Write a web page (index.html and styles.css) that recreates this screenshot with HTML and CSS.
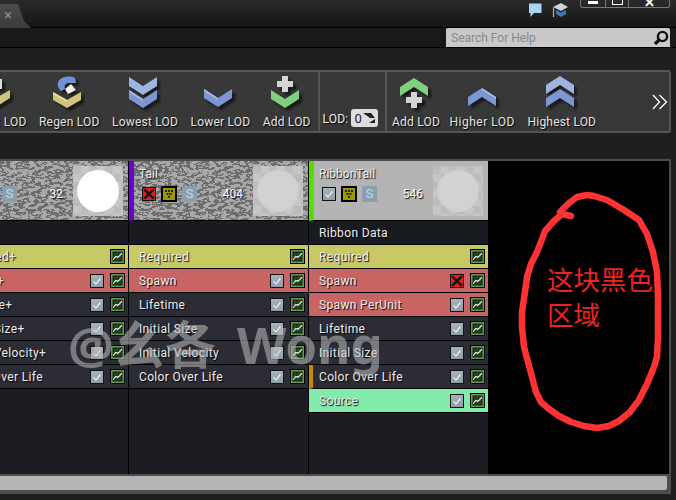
FILE: index.html
```html
<!DOCTYPE html>
<html lang="zh-CN">
<head>
  <meta charset="UTF-8" />
  <title>Cascade</title>
  <link rel="stylesheet" href="styles.css">
</head>

<body>

  <svg class="defs" width="0" height="0">
    <filter id="noise" x="0" y="0" width="100%" height="100%" color-interpolation-filters="sRGB">
      <feTurbulence type="fractalNoise" baseFrequency="0.16 0.33" numOctaves="2" seed="7" />
      <feColorMatrix type="matrix" values="0 0 0 0 .4  0 0 0 0 .4  0 0 0 0 .4  1 0 0 0 0" />
      <feComponentTransfer>
        <feFuncA type="discrete" tableValues="0 0 0 0 0 .9 .9 0 0 0" />
      </feComponentTransfer>
    </filter>
    <symbol id="tick" viewBox="0 0 14 14">
      <path d="M3 7.5 L5.8 10.5 L11 4" fill="none" stroke="#fff" stroke-width="1.2" />
    </symbol>
    <symbol id="cross" viewBox="0 0 14 14">
      <path d="M1.5 1.5 L12.5 12.5 M12.5 1.5 L1.5 12.5" stroke="#111" stroke-width="2.8" />
    </symbol>
    <symbol id="graph" viewBox="0 0 11 11">
      <path d="M0 2.5H11M0 5.5H11M0 8.5H11M2.5 0V11M5.5 0V11M8.5 0V11" stroke="#35552f" stroke-width="1" />
      <path d="M0 9.5 L3.5 5.5 L6 6.5 L11 1.5" fill="none" stroke="#fff" stroke-width="1.3" />
    </symbol>
    <symbol id="dice" viewBox="0 0 12 12">
      <path d="M2 2h2v2h-2zM5 2h2v2h-2zM8 2h2v2h-2zM3.5 5h2v2h-2zM6.5 5h2v2h-2zM5 8h2v2h-2z" fill="#222" />
    </symbol>
    <symbol id="down-blue" viewBox="0 0 40 40">
      <path d="M6 14 L20 23 L34 14 L34 23 L20 32 L6 23Z" fill="#7d97d4" />
      <path d="M6 14 L20 23 L20 25 L6 16Z" fill="#a9bce6" />
    </symbol>
  </svg>

  <div class="titlebar">
    <div class="tab"><span class="tab-close">×</span></div>
    <div class="title-icons">
      <svg class="title-icon" width="16" height="16" viewBox="0 0 16 16">
        <path d="M2 1.5 H14.5 V11 H7 L3.5 15 V11 H2Z" fill="#a9d5f2" />
      </svg>
      <svg class="title-icon" width="18" height="16" viewBox="0 0 18 16">
        <path d="M2 5 L10 1 L17 5 L10 9Z" fill="#c9d4dc" />
        <path d="M5 8 L10 10.5 L15 8 V12 L10 15 L5 12Z" fill="#3f78b4" />
        <path d="M2.5 5.5 V15" stroke="#d8b070" stroke-width="1.2" />
      </svg>
    </div>
    <div class="win-buttons">
      <div class="win-btn win-min"><span></span></div>
      <div class="win-btn win-max"><span></span></div>
      <div class="win-btn win-close">✕</div>
    </div>
  </div>

  <div class="menubar">
    <div class="search">
      <span class="search-text">Search For Help</span>
      <svg width="16" height="16" viewBox="0 0 16 16">
        <circle cx="9.5" cy="6.5" r="4.6" fill="none" stroke="#111" stroke-width="2.4" />
        <path d="M6 10 L2 14" stroke="#111" stroke-width="3.2" />
      </svg>
    </div>
  </div>

  <div class="toolbar-wrap">
    <div class="toolbar">
      <div class="tool">
        <svg class="tool-icon" viewBox="0 0 40 40">
          <path d="M6 15 L20 23 L34 15 V23 L20 32 L6 23Z" fill="#d0c47c" />
          <path d="M12 4 H26 V14 H12Z" fill="#ddd" />
        </svg>
        <span>Reset LOD</span>
      </div>
      <div class="tool">
        <svg class="tool-icon" viewBox="0 0 40 40">
          <path d="M6 17 L20 25 L34 17 V25 L20 33 L6 25Z" fill="#d0c47c" />
          <path d="M6 17 L20 25 L20 27 L6 19Z" fill="#e6dca0" />
          <path d="M11 8 C12 2 22 0 28 3 L29 8 L22 8 C18 8 17 11 18 14 L14 16 C12 14 10 11 11 8Z" fill="#6f93d2" />
          <path d="M18 14 L24 9 L29 15 L21 19Z" fill="#f2f2f2" />
        </svg>
        <span>Regen LOD</span>
      </div>
      <div class="tool">
        <svg class="tool-icon" viewBox="0 0 40 40">
          <path d="M6 2 L20 11 L34 2 V11 L20 20 L6 11Z" fill="#9db3e2" />
          <path d="M6 15 L20 24 L34 15 V24 L20 33 L6 24Z" fill="#7d97d4" />
          <path d="M6 15 L20 24 L20 26 L6 17Z" fill="#a9bce6" />
        </svg>
        <span>Lowest LOD</span>
      </div>
      <div class="tool">
        <svg class="tool-icon"><use href="#down-blue" /></svg>
        <span>Lower LOD</span>
      </div>
      <div class="tool">
        <svg class="tool-icon" viewBox="0 0 40 40">
          <path d="M6 15 L20 24 L34 15 V24 L20 33 L6 24Z" fill="#7fd07f" />
          <path d="M17 1 H23 V6 H28 V12 H23 V17 H17 V12 H12 V6 H17Z" fill="#d4d4d4" />
        </svg>
        <span>Add LOD</span>
      </div>
      <div class="tool-sep"></div>
      <div class="lod-pick">
        <span>LOD:</span>
        <div class="lod-box">0<svg width="12" height="10" viewBox="0 0 12 10"><path d="M0 0 H8 L12 5 L7 5 L0 0Z M12 10 H6 L12 6Z" fill="#222" /></svg></div>
      </div>
      <div class="tool-sep"></div>
      <div class="tool tool-tight">
        <svg class="tool-icon" viewBox="0 0 40 40">
          <path d="M6 12 L20 3 L34 12 V21 L20 12 L6 21Z" fill="#7fd07f" />
          <path d="M17 17 H23 V22 H28 V28 H23 V33 H17 V28 H12 V22 H17Z" fill="#d4d4d4" />
        </svg>
        <span>Add LOD</span>
      </div>
      <div class="tool tool-wide">
        <svg class="tool-icon" viewBox="0 0 40 40">
          <path d="M6 22 L20 13 L34 22 V31 L20 22 L6 31Z" fill="#7d97d4" />
          <path d="M20 13 L34 22 V24 L20 15Z" fill="#a9bce6" />
        </svg>
        <span>Higher LOD</span>
      </div>
      <div class="tool">
        <svg class="tool-icon" viewBox="0 0 40 40">
          <path d="M6 10 L20 1 L34 10 V19 L20 10 L6 19Z" fill="#9db3e2" />
          <path d="M6 23 L20 14 L34 23 V32 L20 23 L6 32Z" fill="#7d97d4" />
        </svg>
        <span>Highest LOD</span>
      </div>
      <svg class="tool-more" width="16" height="16" viewBox="0 0 16 16">
        <path d="M1 1 L7.5 8 L1 15 M7.5 1 L14.5 8 L7.5 15" fill="none" stroke="#fff" stroke-width="1.3" />
      </svg>
    </div>
  </div>

  <div class="panel">
    <div class="emitters">

      <div class="emitter emitter-first">
        <div class="em-head em-blue">
          <svg class="noise"><rect width="100%" height="100%" filter="url(#noise)" /></svg>
          <div class="em-info">
            <div class="em-name">Glue</div>
            <div class="em-ctrl">
              <div class="box-check"><svg><use href="#tick" /></svg></div>
              <div class="box-dice"><svg><use href="#dice" /></svg></div>
              <div class="box-s">S</div>
              <div class="em-count">32</div>
            </div>
          </div>
          <div class="thumb thumb-bright"></div>
        </div>
        <div class="row row-data"></div>
        <div class="row row-req"><span class="row-name">Required+</span><div class="box-graph"><svg><use href="#graph" /></svg></div></div>
        <div class="row row-spawn"><span class="row-name">Spawn+</span><div class="box-check"><svg><use href="#tick" /></svg></div><div class="box-graph"><svg><use href="#graph" /></svg></div></div>
        <div class="row"><span class="row-name">Lifetime+</span><div class="box-check"><svg><use href="#tick" /></svg></div><div class="box-graph"><svg><use href="#graph" /></svg></div></div>
        <div class="row"><span class="row-name">Initial Size+</span><div class="box-check"><svg><use href="#tick" /></svg></div><div class="box-graph"><svg><use href="#graph" /></svg></div></div>
        <div class="row"><span class="row-name">Initial Velocity+</span><div class="box-check"><svg><use href="#tick" /></svg></div><div class="box-graph"><svg><use href="#graph" /></svg></div></div>
        <div class="row"><span class="row-name">Color Over Life</span><div class="box-check"><svg><use href="#tick" /></svg></div><div class="box-graph"><svg><use href="#graph" /></svg></div></div>
      </div>

      <div class="emitter">
        <div class="em-head em-purple">
          <svg class="noise"><rect width="100%" height="100%" filter="url(#noise)" /></svg>
          <div class="em-info">
            <div class="em-name">Tail</div>
            <div class="em-ctrl">
              <div class="box-x"><svg><use href="#cross" /></svg></div>
              <div class="box-dice"><svg><use href="#dice" /></svg></div>
              <div class="box-s">S</div>
              <div class="em-count">404</div>
            </div>
          </div>
          <div class="thumb"></div>
        </div>
        <div class="row row-data"></div>
        <div class="row row-req"><span class="row-name">Required</span><div class="box-graph"><svg><use href="#graph" /></svg></div></div>
        <div class="row row-spawn"><span class="row-name">Spawn</span><div class="box-check"><svg><use href="#tick" /></svg></div><div class="box-graph"><svg><use href="#graph" /></svg></div></div>
        <div class="row"><span class="row-name">Lifetime</span><div class="box-check"><svg><use href="#tick" /></svg></div><div class="box-graph"><svg><use href="#graph" /></svg></div></div>
        <div class="row"><span class="row-name">Initial Size</span><div class="box-check"><svg><use href="#tick" /></svg></div><div class="box-graph"><svg><use href="#graph" /></svg></div></div>
        <div class="row"><span class="row-name">Initial Velocity</span><div class="box-check"><svg><use href="#tick" /></svg></div><div class="box-graph"><svg><use href="#graph" /></svg></div></div>
        <div class="row"><span class="row-name">Color Over Life</span><div class="box-check"><svg><use href="#tick" /></svg></div><div class="box-graph"><svg><use href="#graph" /></svg></div></div>
      </div>

      <div class="emitter">
        <div class="em-head em-green em-selected">
          <div class="em-info">
            <div class="em-name">RibbonTail</div>
            <div class="em-ctrl">
              <div class="box-check"><svg><use href="#tick" /></svg></div>
              <div class="box-dice"><svg><use href="#dice" /></svg></div>
              <div class="box-s">S</div>
              <div class="em-count">546</div>
            </div>
          </div>
          <div class="thumb"></div>
        </div>
        <div class="row row-data row-ribbon"><span class="row-name">Ribbon Data</span></div>
        <div class="row row-req"><span class="row-name">Required</span><div class="box-graph"><svg><use href="#graph" /></svg></div></div>
        <div class="row row-spawn"><span class="row-name">Spawn</span><div class="box-x"><svg><use href="#cross" /></svg></div><div class="box-graph"><svg><use href="#graph" /></svg></div></div>
        <div class="row row-spawn"><span class="row-name">Spawn PerUnit</span><div class="box-check"><svg><use href="#tick" /></svg></div><div class="box-graph"><svg><use href="#graph" /></svg></div></div>
        <div class="row"><span class="row-name">Lifetime</span><div class="box-check"><svg><use href="#tick" /></svg></div><div class="box-graph"><svg><use href="#graph" /></svg></div></div>
        <div class="row"><span class="row-name">Initial Size</span><div class="box-check"><svg><use href="#tick" /></svg></div><div class="box-graph"><svg><use href="#graph" /></svg></div></div>
        <div class="row row-mark"><span class="row-name">Color Over Life</span><div class="box-check"><svg><use href="#tick" /></svg></div><div class="box-graph"><svg><use href="#graph" /></svg></div></div>
        <div class="row row-source"><span class="row-name">Source</span><div class="box-check"><svg><use href="#tick" /></svg></div><div class="box-graph"><svg><use href="#graph" /></svg></div></div>
      </div>

      <div class="blank">
        <svg class="scribble" width="181" height="313" viewBox="0 0 181 313">
          <polyline points="82,54 73,52 65,59 56,69 52,80 48,90 42,102 38,115 36,130 33,150 33,165 35,185 39,200 43,215 47,230 52,240 60,247 70,254 82,260 95,264 108,266 120,264 130,259 141,250 150,238 158,222 165,205 168,195 169,175 169,135 168,110 164,90 158,72 150,58 135,48 118,38 105,34 98,33 88,35 80,41 71,50" />
        </svg>
        <div class="blank-note">这块黑色<br>区域</div>
      </div>
    </div>

    <div class="watermark">@幺各 Wong</div>

    <div class="hscroll-track">
      <div class="hscroll"></div>
    </div>
  </div>

</body>
</html>
```

FILE: styles.css
```css
* {
  box-sizing: border-box;
}

html, body {
  margin: 0;
  height: 500px;
  overflow: hidden;
}

body {
  background: #1f1f1f;
  font-family: Roboto, 'Noto Sans', sans-serif;
  font-size: 12px;
  color: #eee;
  width: 676px;
  position: relative;
}

.defs {
  position: absolute;
}

/* title bar */
.titlebar {
  height: 28px;
  background: linear-gradient(#2b2b2b, #151515);
  display: flex;
  align-items: flex-start;
  border-bottom: 1px solid #000;
  padding-right: 6px;
}

.tab {
  width: 31px;
  height: 24px;
  margin-top: 4px;
  background: linear-gradient(#4d4d4d, #3b3b3b);
  clip-path: polygon(0 0, 18px 0, 24px 17px, 31px 24px, 0 24px);
  color: #8a8a8a;
  font-size: 15px;
  line-height: 23px;
  padding-left: 4px;
}

.title-icons {
  margin-left: auto;
  display: flex;
  gap: 8px;
  padding-top: 2px;
  margin-right: 11px;
}

.win-buttons {
  display: flex;
  height: 8px;
  border: 1px solid #777;
  border-top: none;
  border-radius: 0 0 3px 3px;
  width: 90px;
}

.win-btn {
  height: 7px;
  overflow: hidden;
  border-right: 1px solid #777;
  display: flex;
  justify-content: center;
  color: #fff;
}

.win-min {
  width: 25px;
}

.win-min span {
  width: 10px;
  height: 3px;
  margin-top: 1px;
  background: #fff;
}

.win-max {
  width: 23px;
}

.win-max span {
  width: 11px;
  height: 5px;
  border: 1px solid #fff;
  border-top: none;
}

.win-close {
  flex: 1;
  border-right: none;
  font-size: 13px;
  line-height: 6px;
  font-weight: bold;
}

/* help search row */
.menubar {
  height: 20px;
  background: #191919;
  border-bottom: 1px solid #000;
  display: flex;
  justify-content: flex-end;
  padding-right: 6px;
}

.search {
  width: 224px;
  height: 19px;
  background: #c9c9c9;
  display: flex;
  align-items: center;
  padding: 0 1px 0 5px;
  border-radius: 2px 2px 0 0;
}

.search-text {
  flex: 1;
  color: #8a8a8a;
}

/* toolbar */
.toolbar-wrap {
  height: 111px;
  padding-top: 22px;
  overflow: hidden;
}

.toolbar {
  height: 63px;
  width: 710px;
  margin-left: -39px;
  background: #383838;
  border: 2px solid #555;
  border-radius: 3px;
  display: flex;
  align-items: stretch;
}

.tool {
  display: flex;
  flex-direction: column;
  align-items: center;
  padding: 0 6.25px;
  letter-spacing: 0.2px;
  text-shadow: 1px 1px 1px #000;
  color: #e4e4e4;
}

.tool-tight {
  margin: 0 -3px 0 -3px;
}

.tool-wide {
  letter-spacing: 0.5px;
}

.tool-icon {
  width: 40px;
  height: 40px;
  margin: 3px 4px 0 0;
  filter: drop-shadow(3px 3px 1px rgba(0, 0, 0, 0.55));
}

.tool-wide .tool-icon {
  margin-right: 0;
}

.tool span {
  white-space: nowrap;
}

.tool-sep {
  width: 2px;
  margin: 0 2px 0 1.5px;
  background: #555;
}

.lod-pick {
  display: flex;
  align-items: flex-end;
  gap: 3px;
  padding-bottom: 4px;
  margin-right: 5px;
  letter-spacing: 0.2px;
  text-shadow: 1px 1px 1px #000;
}

.lod-pick span {
  padding-bottom: 1px;
}

.lod-box {
  width: 27px;
  height: 18px;
  background: #ddd;
  border-radius: 3px;
  color: #222;
  font-size: 13px;
  display: flex;
  align-items: center;
  justify-content: center;
  gap: 1px;
  text-shadow: none;
}

.tool-more {
  margin: 22px 1px 0 auto;
}

/* cascade panel */
.panel {
  height: 340px;
}

.emitters {
  height: 315px;
  width: 671px;
  border-top: 2px solid #4d4d4d;
  border-right: 2px solid #4d4d4d;
  display: flex;
  background: #000;
  overflow: hidden;
}

.emitter {
  width: 180px;
  flex: none;
  background: #1c1c22;
  border-right: 1px solid #000;
}

.emitter-first {
  margin-left: -51px;
}

.em-head {
  height: 60px;
  border-bottom: 1px solid #000;
  background: #a9a9a9;
  display: flex;
  position: relative;
  overflow: hidden;
}

.noise {
  position: absolute;
  left: 0;
  top: 0;
  width: 100%;
  height: 100%;
}

.em-blue {
  border-left: 5px solid #2244cc;
}

.em-purple {
  border-left: 5px solid #6a00d4;
}

.em-green {
  border-left: 5px solid #55dd00;
}

.em-selected {
  background: #b4b4b4;
}

.em-info {
  position: relative;
  width: 120px;
  padding: 6px 11px 0 5px;
}

.em-name {
  text-shadow: 1px 1px 1px #000;
  line-height: 14px;
}

.em-ctrl {
  display: flex;
  align-items: center;
  margin-top: 5px;
  padding-left: 3px;
}

.em-count {
  margin-left: auto;
  color: #fff;
  text-shadow: 1px 1px 1px #000;
}

.em-ctrl .box-dice {
  margin-left: 5px;
}

.em-ctrl .box-s {
  margin-left: 5px;
}

.box-check, .box-x {
  width: 14px;
  height: 14px;
  flex: none;
  border: 1px solid #111;
  background: linear-gradient(#a8b4bc, #8f9da6);
}

.box-check svg, .box-x svg {
  display: block;
  width: 12px;
  height: 12px;
}

.box-x {
  background: #e02020;
}

.box-dice {
  width: 16px;
  height: 16px;
  flex: none;
  background: #9a9a00;
  border: 2px solid #000;
}

.box-dice svg {
  display: block;
  width: 12px;
  height: 12px;
}

.box-s {
  width: 15px;
  height: 16px;
  flex: none;
  background: #8d9eac;
  color: #a8e4f0;
  text-align: center;
  line-height: 16px;
  font-size: 13px;
}

.thumb {
  position: relative;
  width: 50px;
  height: 50px;
  margin: 5px 0 0 -1px;
  background: repeating-conic-gradient(#c6c6c6 0 25%, #bcbcbc 0 50%) 0 0 / 16px 16px;
}

.thumb::after {
  content: '';
  position: absolute;
  left: 4px;
  top: 4px;
  width: 42px;
  height: 42px;
  border-radius: 50%;
  background: radial-gradient(#d2d2d2 60%, #c8c8c8);
}

.thumb-bright::after {
  background: radial-gradient(#fff 70%, #eee);
}

/* module rows */
.row {
  height: 24px;
  border-bottom: 1px solid #000;
  background: #2b2c36;
  display: flex;
  align-items: center;
  padding: 0 3px 0 10px;
  gap: 6px;
}

.row-name {
  flex: 1;
  white-space: nowrap;
  letter-spacing: 0.35px;
  text-shadow: 1px 1px 1px #000;
}

.row-data {
  background: #1a1a20;
}

.row-ribbon {
  background: #181b1f;
}

.row-req {
  background: #c8c864;
}

.row-spawn {
  background: #c86464;
}

.row-source {
  background: #82eaaa;
}

.row-mark {
  border-left: 4px solid #c88a00;
  padding-left: 6px;
}

.box-graph {
  width: 15px;
  height: 15px;
  flex: none;
  padding: 2px;
  background: #16240f;
  border: 1px solid #000;
  box-shadow: inset 0 0 0 1.5px #5f9c52;
}

.box-graph svg {
  display: block;
  width: 9px;
  height: 9px;
}

/* black area with the red note */
.blank {
  flex: 1;
  position: relative;
  background: #000;
}

.scribble {
  position: absolute;
  left: 0;
  top: 1px;
}

.scribble polyline {
  fill: none;
  stroke: #ff3333;
  stroke-width: 6.5;
  stroke-linejoin: round;
  stroke-linecap: round;
}

.blank-note {
  position: absolute;
  left: 58px;
  top: 100px;
  color: #ee2222;
  font-family: 'Noto Sans CJK SC', sans-serif;
  font-size: 26.5px;
  line-height: 35px;
  white-space: nowrap;
}

.watermark {
  position: absolute;
  left: 68px;
  top: 314px;
  font-family: 'Noto Sans', 'Noto Sans CJK SC', sans-serif;
  font-size: 51px;
  font-weight: bold;
  word-spacing: 8px;
  line-height: 60px;
  color: rgba(190, 190, 190, 0.55);
  white-space: nowrap;
}

/* bottom scrollbar */
.hscroll-track {
  width: 671px;
  height: 21px;
  margin-top: -1px;
  background: #4d4d4d;
  padding: 3px 4px 4px 0;
}

.hscroll {
  height: 14px;
  background: #b5b5b5;
  border-radius: 0 2px 2px 0;
}
```
